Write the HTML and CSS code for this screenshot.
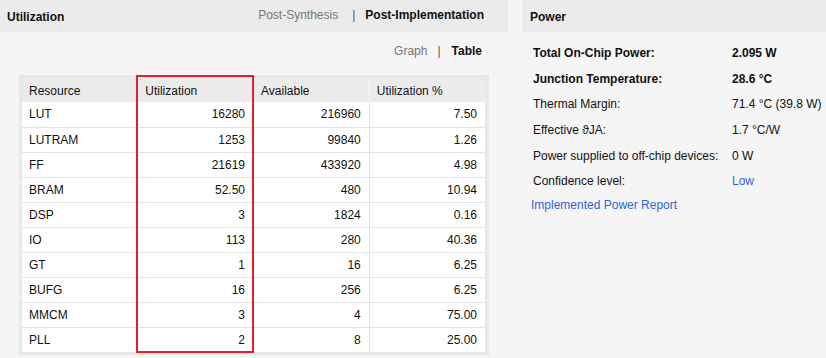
FILE: index.html
```html
<!DOCTYPE html>
<html lang="en">
<head>
    <meta charset="UTF-8">
    <title>Project Summary</title>
    <link rel="stylesheet" href="styles.css">
</head>
<body>
    <div class="dashboard">
        <section class="panel panel-util">
            <header class="panel-header">
                <h2>Utilization</h2>
                <nav class="tabs">
                    <a class="tab">Post-Synthesis</a>
                    <span class="sep">|</span>
                    <a class="tab active">Post-Implementation</a>
                </nav>
            </header>

            <div class="view-toggle">
                <a class="tab">Graph</a>
                <span class="sep">|</span>
                <a class="tab active">Table</a>
            </div>

            <div class="table-frame">
                <table class="util-table">
                    <thead>
                        <tr>
                            <th>Resource</th>
                            <th>Utilization</th>
                            <th>Available</th>
                            <th>Utilization %</th>
                        </tr>
                    </thead>
                    <tbody>
                        <tr><td>LUT</td><td>16280</td><td>216960</td><td>7.50</td></tr>
                        <tr><td>LUTRAM</td><td>1253</td><td>99840</td><td>1.26</td></tr>
                        <tr><td>FF</td><td>21619</td><td>433920</td><td>4.98</td></tr>
                        <tr><td>BRAM</td><td>52.50</td><td>480</td><td>10.94</td></tr>
                        <tr><td>DSP</td><td>3</td><td>1824</td><td>0.16</td></tr>
                        <tr><td>IO</td><td>113</td><td>280</td><td>40.36</td></tr>
                        <tr><td>GT</td><td>1</td><td>16</td><td>6.25</td></tr>
                        <tr><td>BUFG</td><td>16</td><td>256</td><td>6.25</td></tr>
                        <tr><td>MMCM</td><td>3</td><td>4</td><td>75.00</td></tr>
                        <tr><td>PLL</td><td>2</td><td>8</td><td>25.00</td></tr>
                    </tbody>
                </table>
                <div class="highlight"></div>
            </div>
        </section>

        <section class="panel panel-power">
            <header class="panel-header">
                <h2>Power</h2>
            </header>
            <dl class="power-list">
                <dt class="strong">Total On-Chip Power:</dt>
                <dd class="strong">2.095 W</dd>
                <dt class="strong">Junction Temperature:</dt>
                <dd class="strong">28.6 °C</dd>
                <dt>Thermal Margin:</dt>
                <dd>71.4 °C (39.8 W)</dd>
                <dt>Effective ϑJA:</dt>
                <dd>1.7 °C/W</dd>
                <dt>Power supplied to off-chip devices:</dt>
                <dd>0 W</dd>
                <dt>Confidence level:</dt>
                <dd><a class="link">Low</a></dd>
            </dl>
            <a class="link report-link">Implemented Power Report</a>
        </section>
    </div>
</body>
</html>
```

FILE: styles.css
```css
/* Basic styling */
* {
    margin: 0;
    padding: 0;
    box-sizing: border-box;
}

body {
    background-color: #f5f5f5;
    color: #111;
    font-family: 'Liberation Sans', Arial, sans-serif;
    font-size: 12px;
    width: 826px;
    height: 358px;
    overflow: hidden;
}

.dashboard {
    display: flex;
    gap: 14px;
}

.panel-util {
    width: 508px;
}

.panel-power {
    flex: 1;
}

/* Panel headers */
.panel-header {
    height: 32px;
    background-color: #ebebeb;
    display: flex;
    align-items: center;
    justify-content: space-between;
    padding: 0 24px 0 7px;
}

.panel-header h2 {
    font-size: 12px;
    font-weight: bold;
    padding-top: 1px;
}

.panel-power .panel-header {
    padding-left: 8px;
}

.tabs,
.view-toggle {
    display: flex;
    align-items: center;
}

.tabs {
    padding-bottom: 3px;
}

.tab {
    color: #777;
}

.tab.active {
    color: #111;
    font-weight: bold;
}

.sep {
    color: #555;
    margin: 0 10px 0 14px;
}

.view-toggle {
    justify-content: flex-end;
    height: 18px;
    margin-top: 10px;
    padding-right: 26px;
}

.view-toggle .sep {
    margin: 0 11px 0 10px;
}

/* Utilization table */
.table-frame {
    position: relative;
    width: 470px;
    margin: 15px 0 0 19px;
    padding: 3px 4px 3px 3px;
    background-color: #e8e8e8;
}

.util-table {
    width: 100%;
    border-collapse: collapse;
    table-layout: fixed;
}

.util-table th,
.util-table td {
    height: 25px;
    padding: 0 8px 0 7px;
    white-space: nowrap;
}

.util-table th {
    height: 24px;
    text-align: left;
    font-weight: normal;
    background-color: #ebebeb;
    border-left: 1px solid #f6f6f6;
    padding-top: 1px;
}

.util-table th:first-child {
    border-left: none;
}

.util-table td {
    background-color: #fff;
    text-align: right;
    border-top: 1px solid #e3e3e3;
    border-left: 1px solid #e3e3e3;
}

.util-table td:first-child {
    text-align: left;
    border-left: none;
}

.util-table tbody tr:first-child td {
    border-top: none;
}

.highlight {
    position: absolute;
    left: 117px;
    top: 0;
    width: 118px;
    height: 278px;
    border: 2px solid #e51f2b;
}

/* Power summary */
.power-list {
    display: grid;
    grid-template-columns: 199px auto;
    grid-auto-rows: 25.7px;
    align-items: center;
    padding: 8px 0 0 11px;
}

.power-list .strong {
    font-weight: bold;
}

.link {
    color: #2f66d6;
}

.report-link {
    display: block;
    padding-left: 9px;
    line-height: 25px;
    margin-top: -1px;
}
```
